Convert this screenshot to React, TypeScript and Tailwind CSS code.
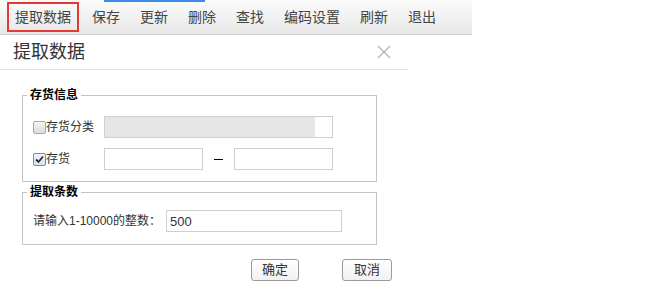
import { useState } from 'react';

const font = { fontFamily: '"Liberation Sans", "Noto Sans CJK SC", sans-serif' };

const toolItems = ['保存', '更新', '删除', '查找', '编码设置', '刷新', '退出'];

const Check = ({ checked }: { checked: boolean }) => (
  <span
    className={
      checked
        ? 'w-[13px] h-[13px] border border-[#5b8fd6] bg-gradient-to-b from-[#eef4fc] to-[#d6e4f6] rounded-[2px] flex items-center justify-center shrink-0'
        : 'w-[13px] h-[13px] border border-[#a9a9a9] bg-gradient-to-b from-[#f4f4f4] to-[#dcdcdc] rounded-[2px] shrink-0'
    }
  >
    {checked && (
      <svg width="9" height="9" viewBox="0 0 9 9">
        <path d="M1 4.5 L3.5 7 L8 1.5" fill="none" stroke="#2b2b2b" strokeWidth="1.8" />
      </svg>
    )}
  </span>
);

const App = () => {
  const [qty, setQty] = useState('500');

  return (
    <div className="w-[648px] h-[288px] bg-white overflow-hidden text-[#333]" style={font}>
      {/* toolbar */}
      <div className="relative w-[472px] h-[35px] flex items-center pl-[7px] bg-gradient-to-b from-[#fbfbfb] to-[#e8e8e8] border-b border-[#cdcdcd]">
        <span className="absolute top-0 left-[104px] w-[101px] h-[2px] bg-[#3d8be8]"></span>
        <button className="h-[30px] border-2 border-[#e53935] px-[6px] text-[14px] leading-[26px] text-[#444] mr-[3px]">
          提取数据
        </button>
        {toolItems.map((t) => (
          <button key={t} className="px-[10px] text-[14px] leading-[26px] text-[#444]">
            {t}
          </button>
        ))}
      </div>

      {/* dialog */}
      <div className="w-[408px]">
        <div className="h-[35px] flex items-center justify-between pl-[13px] pr-[17px] border-b border-[#e2e2e2]">
          <span className="text-[18px] leading-[24px] text-[#333]">提取数据</span>
          <svg width="14" height="14" viewBox="0 0 14 14">
            <path d="M1 1 L13 13 M13 1 L1 13" stroke="#b0b0b0" strokeWidth="1.2" fill="none" />
          </svg>
        </div>

        <div className="pl-[22px] pt-[17px] text-[12px]">
          <fieldset className="w-[355px] border border-[#c4c4c4] pl-[10px] pb-[11px]">
            <legend className="ml-[-6px] px-[3px] font-bold text-black leading-[16px]">存货信息</legend>
            <div className="pt-[13px] flex flex-col gap-[10px]">
              <div className="flex items-center h-[22px]">
                <label className="w-[71px] flex items-center">
                  <Check checked={false} />
                  <span className="leading-[16px]">存货分类</span>
                </label>
                <div className="w-[229px] h-[22px] border border-[#cfcfcf] bg-white flex">
                  <div className="w-[210px] h-full bg-[#e6e6e6]"></div>
                </div>
              </div>
              <div className="flex items-center h-[22px]">
                <label className="w-[71px] flex items-center">
                  <Check checked={true} />
                  <span className="leading-[16px]">存货</span>
                </label>
                <input className="w-[99px] h-[22px] border border-[#cfcfcf] outline-none" />
                <span className="w-[31px] flex justify-center">
                  <span className="w-[9px] h-[1px] bg-black"></span>
                </span>
                <input className="w-[99px] h-[22px] border border-[#cfcfcf] outline-none" />
              </div>
            </div>
          </fieldset>

          <fieldset className="w-[355px] mt-[2px] border border-[#c4c4c4] pl-[10px] pb-[12px]">
            <legend className="ml-[-6px] px-[3px] font-bold text-black leading-[16px]">提取条数</legend>
            <div className="pt-[10px] flex items-center">
              <span className="w-[133px] leading-[16px]">请输入1-10000的整数：</span>
              <input
                value={qty}
                onChange={(e) => setQty(e.target.value)}
                className="w-[176px] h-[22px] border border-[#cfcfcf] px-[3px] text-[13px] text-[#333] outline-none"
              />
            </div>
          </fieldset>
        </div>

        <div className="flex justify-end gap-[43px] pr-[16px] mt-[14px]">
          <button className="w-[48px] h-[22px] rounded-[3px] border border-[#9a9a9a] bg-gradient-to-b from-white to-[#f1f1f1] text-[13px] leading-[20px]">
            确定
          </button>
          <button className="w-[50px] h-[22px] rounded-[3px] border border-[#9a9a9a] bg-gradient-to-b from-white to-[#f1f1f1] text-[13px] leading-[20px]">
            取消
          </button>
        </div>
      </div>
    </div>
  );
};

export default App;
